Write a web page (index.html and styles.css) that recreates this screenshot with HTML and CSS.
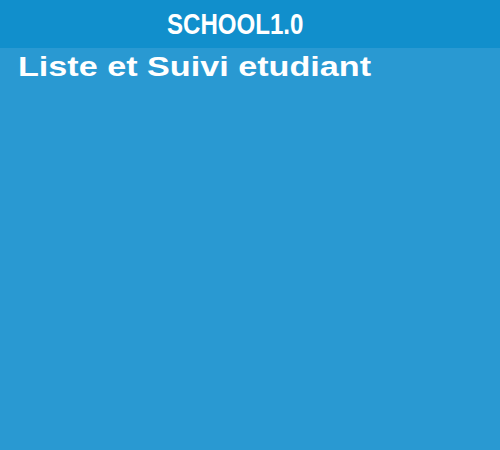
FILE: index.html
```html
<!DOCTYPE html>
<html lang="fr">
<head>
<meta charset="utf-8">
<title>SCHOOL1.0</title>
<link rel="stylesheet" href="styles.css">
</head>
<body>
<header class="topbar">
  <h1 class="brand">SCHOOL1.0</h1>
</header>
<main class="content">
  <h2 class="page-title">Liste et Suivi etudiant</h2>
</main>
</body>
</html>
```

FILE: styles.css
```css
html, body {
  margin: 0;
  padding: 0;
  height: 100%;
  overflow: hidden;
}
body {
  background: #2999d2;
  font-family: "Liberation Sans", Arial, sans-serif;
  color: #ffffff;
}
.topbar {
  height: 48px;
  background: #118fcc;
  display: flex;
  align-items: center;
  justify-content: center;
  padding-right: 30px;
}
.brand {
  margin: 0;
  font-size: 29px;
  font-weight: 700;
  line-height: 1;
  transform: scaleX(0.83);
}
.content {
  padding: 3px 0 0 18px;
}
.page-title {
  margin: 0;
  width: max-content;
  font-size: 28px;
  font-weight: 700;
  line-height: 32px;
  transform: scaleX(1.22);
  transform-origin: left center;
  white-space: nowrap;
}
```
